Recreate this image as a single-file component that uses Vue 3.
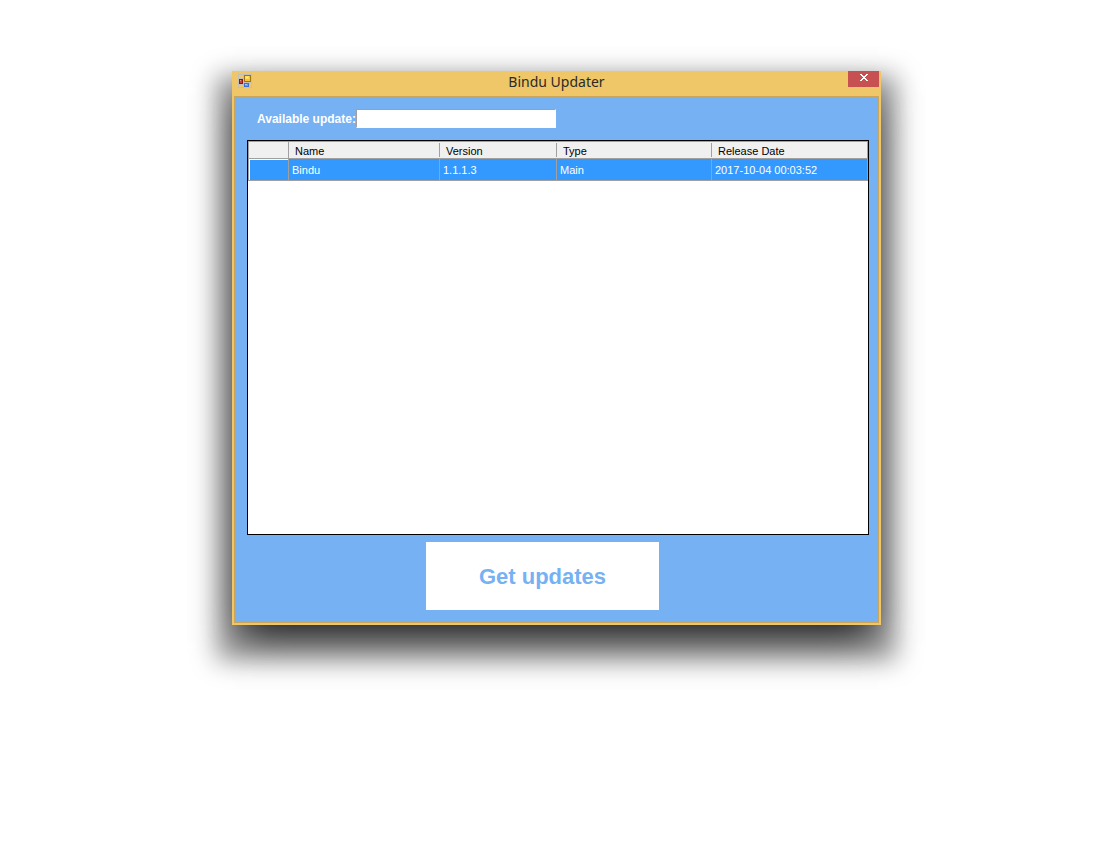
<script setup>
import { ref } from 'vue'

const available = ref('')
const updates = [
  { name: 'Bindu', version: '1.1.1.3', type: 'Main', date: '2017-10-04 00:03:52' },
]
</script>

<template>
  <main class="desktop">
    <section class="window" aria-labelledby="window-title">
      <header class="titlebar">
        <svg class="app-icon" viewBox="0 0 14 14" width="14" height="14" shape-rendering="crispEdges" aria-hidden="true">
          <path d="M0 0h14v14H0z" fill="#c2c0b8" />
          <path d="M1 1h4v3H1zM1 11h4v2H1zM12 9h1v4h-1z" fill="#efc768" />
          <path d="M1 5h4v5H1z" fill="#8d1515" />
          <path d="M2 6h2v3H2z" fill="#c8403a" />
          <path d="M2 6h1v1H2z" fill="#eb8f86" />
          <path d="M6 1h7v7H6z" fill="#a27412" />
          <path d="M7 2h5v5H7z" fill="#f9c425" />
          <path d="M7 2h4v3H7z" fill="#ffd95a" />
          <path d="M8 3h2v1H8z" fill="#fff0a8" />
          <path d="M6 9h5v4H6z" fill="#3d6fd6" />
          <path d="M7 10h3v2H7z" fill="#6f9bee" />
          <path d="M7 10h2v1H7z" fill="#a5c3fa" />
        </svg>
        <h1 id="window-title">Bindu Updater</h1>
        <button class="close" type="button" aria-label="Close">
          <svg viewBox="0 0 8 7" width="8" height="7" shape-rendering="crispEdges" aria-hidden="true">
            <path d="M0 0h2v1H0zM6 0h2v1H6zM1 1h2v1H1zM5 1h2v1H5zM2 2h4v1H2zM3 3h2v1H3zM2 4h4v1H2zM1 5h2v1H1zM5 5h2v1H5zM0 6h2v1H0zM6 6h2v1H6z" fill="#fff" />
          </svg>
        </button>
      </header>

      <div class="client">
        <div class="field">
          <label for="available">Available update:</label>
          <input id="available" v-model="available" type="text" />
        </div>

        <div class="grid">
          <table>
            <colgroup>
              <col class="col-row" />
              <col class="col-name" />
              <col class="col-version" />
              <col class="col-type" />
              <col />
            </colgroup>
            <thead>
              <tr>
                <td class="corner"></td>
                <th scope="col">Name</th>
                <th scope="col">Version</th>
                <th scope="col">Type</th>
                <th scope="col">Release Date</th>
              </tr>
            </thead>
            <tbody>
              <tr v-for="item in updates" :key="item.name">
                <td class="row-head"></td>
                <td>{{ item.name }}</td>
                <td>{{ item.version }}</td>
                <td>{{ item.type }}</td>
                <td>{{ item.date }}</td>
              </tr>
            </tbody>
          </table>
        </div>

        <div class="actions">
          <button class="get" type="button">Get updates</button>
        </div>
      </div>
    </section>
  </main>
</template>

<style>
body {
  margin: 0;
  background: #fff;
}
</style>

<style scoped>
* {
  box-sizing: border-box;
}

.desktop {
  min-height: 100vh;
  padding: 71px 231px 0 232px;
  font-family: "Liberation Sans", Arial, sans-serif;
}

.window {
  min-width: 560px;
  padding: 0 2px 2px;
  background: #efc768;
  box-shadow:
    0 20px 24px 16px rgba(0, 0, 0, 0.36),
    0 20px 32px -4px rgba(0, 0, 0, 0.5),
    0 20px 36px -20px rgba(0, 0, 0, 0.7);
}

.titlebar {
  display: grid;
  grid-template-columns: 1fr auto 1fr;
  align-items: start;
  height: 25px;
}

.app-icon {
  margin: 3px 0 0 4px;
}

h1 {
  margin: 0;
  font: 400 14px/22px "Noto Sans", sans-serif;
  color: #2b2b26;
}

.close {
  display: flex;
  justify-content: center;
  justify-self: end;
  width: 31px;
  height: 16px;
  padding: 3px 0 0;
  border: 0;
  background: #c75050;
}

.client {
  padding: 12px 9px 12px 12px;
  border: 1px solid #c9a65c;
  background: #76b1f4;
}

.field {
  display: flex;
  align-items: center;
  margin-left: 10px;
}

.field label {
  width: 99px;
  padding-top: 2px;
  font-size: 12px;
  font-weight: 700;
  line-height: 17px;
  white-space: nowrap;
  color: #fff;
}

.field input {
  width: 200px;
  height: 19px;
  padding: 0 3px;
  border: 1px solid #fff;
  border-top-color: #a0a0a0;
  border-left-color: #a0a0a0;
  border-radius: 0;
  outline: 0;
  background: #fff;
  font: 12px "Liberation Sans", Arial, sans-serif;
}

.grid {
  min-height: 395px;
  margin-top: 12px;
  border: 1px solid #000;
  background: #fff;
}

table {
  width: 100%;
  table-layout: fixed;
  border-collapse: separate;
  border-spacing: 0;
  border: solid #a0a0a0;
  border-width: 1px 0 0 1px;
  font-size: 11px;
}

.col-row {
  width: 40px;
}

.col-name {
  width: 151px;
}

.col-version {
  width: 117px;
}

.col-type {
  width: 155px;
}

thead td,
thead th {
  height: 17px;
  padding: 2px 0 0 6px;
  border-bottom: 1px solid #a0a0a0;
  background: linear-gradient(#a0a0a0, #a0a0a0) right center / 1px 14px no-repeat #f0f0f0;
  font-weight: 400;
  line-height: 14px;
  text-align: left;
  color: #000;
}

thead .corner,
thead th:last-child {
  border-right: 1px solid #a0a0a0;
  background: #f0f0f0;
}

tbody td {
  height: 22px;
  padding: 2px 0 0 3px;
  border: solid #a0a0a0;
  border-width: 0 1px 1px 0;
  background: #3399ff;
  line-height: 19px;
  color: #fff;
}

tbody .row-head {
  box-shadow: inset 1px 1px #fff;
}

.actions {
  display: flex;
  justify-content: center;
  margin-top: 7px;
  padding-right: 31px;
}

.get {
  width: 233px;
  height: 68px;
  padding: 2px 0 0;
  border: 0;
  background: #fff;
  font: 700 22px "Liberation Sans", Arial, sans-serif;
  color: #76b1f4;
}
</style>
